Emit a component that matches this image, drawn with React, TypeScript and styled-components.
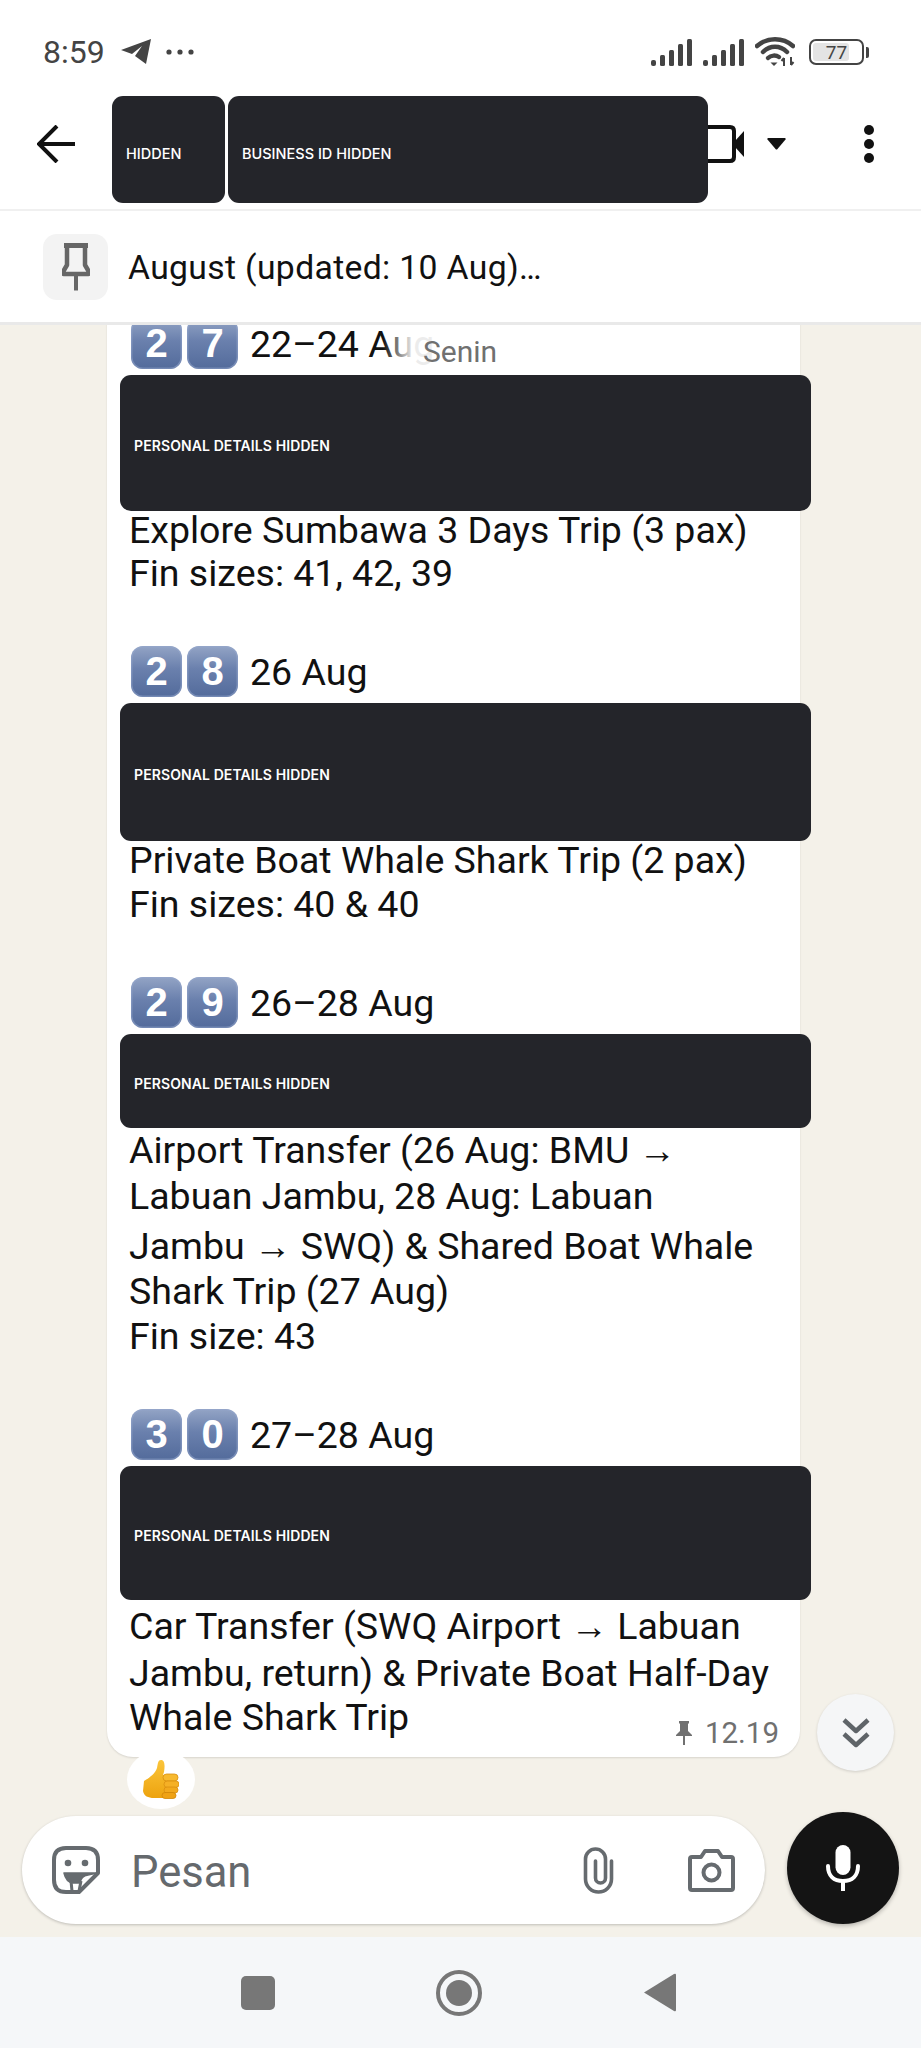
import React from "react";
import styled, { createGlobalStyle } from "styled-components";

const Global = createGlobalStyle`
  html, body { margin: 0; padding: 0; background: #fff; }
  * { box-sizing: border-box; }
`;

const Page = styled.div`
  position: relative;
  width: 921px;
  height: 2048px;
  display: flex;
  flex-direction: column;
  overflow: hidden;
  font-family: Roboto, "Liberation Sans", sans-serif;
  color: #111;
  background: #fff;
`;

const StatusBar = styled.div`
  height: 96px;
  flex: none;
  padding: 8px 52px 0 43px;
  display: flex;
  align-items: center;
  color: #444;
`;
const Time = styled.span`
  font-size: 32px;
  width: 78px;
`;
const StatusIcons = styled.div`
  margin-left: auto;
  display: flex;
  align-items: center;
  gap: 11px;
`;
const Battery = styled.div`
  position: relative;
  width: 55px;
  height: 26px;
  border: 2.5px solid #444;
  border-radius: 7px;
  margin-left: 3px;
  padding: 2px;
  display: flex;
`;
const BatteryFill = styled.div`
  width: 77%;
  background: #e4e4e4;
  border-radius: 3px;
`;
const BatteryText = styled.span`
  position: absolute;
  inset: 0;
  display: flex;
  align-items: center;
  justify-content: center;
  font-size: 19px;
  color: #444;
`;
const BatteryCap = styled.div`
  width: 3px;
  height: 11px;
  background: #444;
  border-radius: 0 2px 2px 0;
  margin-left: -9px;
`;

const Header = styled.header`
  height: 115px;
  flex: none;
  padding: 0 0 17px 37px;
  display: flex;
  align-items: center;
  border-bottom: 2px solid #f0f0f0;
`;
const HeaderRedaction = styled.div<{ $w: number }>`
  width: ${(p) => p.$w}px;
  height: 107px;
  align-self: flex-start;
  flex: none;
  background: #24252a;
  border-radius: 11px;
  display: flex;
  align-items: center;
  padding: 7px 0 0 14px;
  color: #fff;
  font: 500 14.5px Inter, Roboto, sans-serif;
`;
const RedactionGroup = styled.div`
  display: flex;
  gap: 3px;
  margin-left: 37px;
  align-self: flex-start;
  position: relative;
`;

const PinBar = styled.div`
  height: 114px;
  flex: none;
  padding-left: 43px;
  display: flex;
  align-items: center;
  gap: 20px;
  border-bottom: 3px solid #e9e9e9;
  position: relative;
  z-index: 2;
  background: #fff;
`;
const PinTile = styled.div`
  width: 65px;
  height: 66px;
  background: #f3f3f3;
  border-radius: 14px;
  display: flex;
  align-items: center;
  justify-content: center;
`;
const PinText = styled.span`
  font-size: 33.7px;
  letter-spacing: 0.35px;
  padding-top: 2px;
`;

const Chat = styled.main`
  position: relative;
  flex: 1;
  min-height: 0;
  display: flex;
  flex-direction: column;
  justify-content: flex-end;
  background: #f4f1e9;
  overflow: hidden;
`;
const Bubble = styled.section`
  position: relative;
  flex: none;
  width: 693px;
  margin-left: 107px;
  padding: 0 22px 18px 24px;
  background: #fff;
  border-radius: 0 0 26px 26px;
  box-shadow: 0 1px 2px rgba(0, 0, 0, 0.12);
`;
const Entry = styled.div`
  & + & {
    margin-top: 51px;
  }
`;
const EntryHead = styled.div`
  display: flex;
  align-items: center;
  height: 51px;
`;
const Keycap = styled.span`
  width: 51px;
  height: 51px;
  margin-right: 5px;
  border-radius: 12px;
  background: linear-gradient(180deg, #93a4c5 0%, #6a80ad 45%, #536b9b 100%);
  box-shadow: inset 0 0 0 1.5px rgba(150, 168, 205, 0.5);
  color: #fff;
  display: flex;
  align-items: center;
  justify-content: center;
  font: 700 40px "Liberation Sans", sans-serif;
`;
const DateText = styled.span`
  font-size: 37.5px;
  margin-left: 7px;
`;
const Redaction = styled.div<{ $h: number }>`
  height: ${(p) => p.$h}px;
  margin: 6px -33px 0 -11px;
  background: #24252a;
  border-radius: 11px;
  color: #fff;
  display: flex;
  align-items: center;
  padding: 5px 0 0 14px;
  font: 600 14px Inter, Roboto, sans-serif;
  letter-spacing: 0.1px;
  position: relative;
`;
const Body = styled.div`
  margin: -3px 0 0 -2px;
  font-size: 37.5px;
  color: #111;
`;
const Line = styled.div<{ $lift: number }>`
  line-height: 44px;
  height: ${(p) => 44 + p.$lift}px;
  padding-top: ${(p) => Math.max(0, p.$lift)}px;
  white-space: nowrap;
`;
const Meta = styled.div`
  position: absolute;
  right: 21px;
  bottom: 7px;
  display: flex;
  align-items: center;
  gap: 13px;
  font-size: 29.5px;
  color: #707070;
`;
const DateChip = styled.div`
  position: absolute;
  top: 7px;
  left: 383px;
  padding: 0 34px 0 40px;
  font-size: 30px;
  line-height: 40px;
  color: #707070;
  background: linear-gradient(90deg, rgba(255, 255, 255, 0) 0%, rgba(255, 255, 255, 0.92) 20%, rgba(255, 255, 255, 0.92) 78%, rgba(255, 255, 255, 0) 100%);
  z-index: 1;
`;
const ScrollButton = styled.div`
  position: absolute;
  left: 817px;
  bottom: 166px;
  width: 77px;
  height: 77px;
  border-radius: 50%;
  background: #f5f6f7;
  box-shadow: 0 1px 3px rgba(0, 0, 0, 0.15);
  display: flex;
  align-items: center;
  justify-content: center;
`;
const Reaction = styled.div`
  position: absolute;
  left: 127px;
  bottom: 128px;
  width: 68px;
  height: 59px;
  border-radius: 50%;
  background: #fff;
  display: flex;
  align-items: center;
  justify-content: center;
`;
const ComposerRow = styled.div`
  flex: none;
  display: flex;
  align-items: flex-end;
  padding: 55px 22px 13px 22px;
`;
const Composer = styled.div`
  width: 744px;
  height: 108px;
  border-radius: 54px;
  background: #fff;
  box-shadow: 0 1px 3px rgba(0, 0, 0, 0.22);
  display: flex;
  align-items: center;
  padding-left: 30px;
  padding-right: 30px;
`;
const Placeholder = styled.span`
  font-size: 43.5px;
  color: #65696d;
  margin-left: 31px;
  padding-top: 4px;
  flex: 1;
`;
const MicButton = styled.div`
  width: 112px;
  height: 112px;
  margin-left: 22px;
  border-radius: 50%;
  background: #141414;
  box-shadow: 0 2px 4px rgba(0, 0, 0, 0.25);
  display: flex;
  align-items: center;
  justify-content: center;
`;
const NavBar = styled.nav`
  height: 111px;
  flex: none;
  background: #f5f7f9;
  display: flex;
  align-items: center;
  padding-left: 241px;
`;

const Cap = ({ d }: { d: string }) => <Keycap>{d}</Keycap>;

const Signal = () => (
  <svg width="41" height="27" viewBox="0 0 41 27" fill="#444">
    <rect x="0" y="21" width="5" height="6" rx="2" />
    <rect x="9" y="16" width="5" height="11" rx="1.5" />
    <rect x="18" y="11" width="5" height="16" rx="1.5" />
    <rect x="27" y="5" width="5" height="22" rx="1.5" />
    <rect x="36" y="0" width="5" height="27" rx="1.5" />
  </svg>
);

const entries: { d: string[]; date: string; h: number; lines: [string, number][] }[] = [
  {
    d: ["2", "7"],
    date: "22–24 Aug",
    h: 136,
    lines: [
      ["Explore Sumbawa 3 Days Trip (3 pax)", -1],
      ["Fin sizes: 41, 42, 39", 0],
    ],
  },
  {
    d: ["2", "8"],
    date: "26 Aug",
    h: 138,
    lines: [
      ["Private Boat Whale Shark Trip (2 pax)", 0],
      ["Fin sizes: 40 & 40", 0],
    ],
  },
  {
    d: ["2", "9"],
    date: "26–28 Aug",
    h: 94,
    lines: [
      ["Airport Transfer (26 Aug: BMU →", 3],
      ["Labuan Jambu, 28 Aug: Labuan", 2],
      ["Jambu → SWQ) & Shared Boat Whale", 6],
      ["Shark Trip (27 Aug)", 1],
      ["Fin size: 43", 1],
    ],
  },
  {
    d: ["3", "0"],
    date: "27–28 Aug",
    h: 134,
    lines: [
      ["Car Transfer (SWQ Airport → Labuan", 7],
      ["Jambu, return) & Private Boat Half-Day", 3],
      ["Whale Shark Trip", 0],
    ],
  },
];

export default function App() {
  return (
    <Page>
      <Global />
      <StatusBar>
        <Time>8:59</Time>
        <svg width="30" height="26" viewBox="0 0 30 26" fill="#444">
          <path d="M30 0 L0 11 L11 15 L21 7 L14 17 L25 25 Z" />
        </svg>
        <svg width="28" height="6" viewBox="0 0 28 6" fill="#444" style={{ marginLeft: 15 }}>
          <circle cx="3" cy="3" r="2.6" />
          <circle cx="14" cy="3" r="2.6" />
          <circle cx="25" cy="3" r="2.6" />
        </svg>
        <StatusIcons>
          <Signal />
          <Signal />
          <svg width="40" height="30" viewBox="0 0 40 30" fill="none" stroke="#444" strokeWidth="4.5" strokeLinecap="round">
            <path d="M2 9 C12 0 28 0 38 9" />
            <path d="M8 15 C15 8 25 8 32 15" />
            <path d="M13 21 C16 18 21 18 24 20" />
            <path d="M19 29 L15.5 25.5 H22.5 Z" fill="#444" stroke="none" />
            <path d="M29 29 V21 M29 21 L26.5 24 M36 20 V28 M36 28 L38.5 25" strokeWidth="2" strokeLinecap="butt" />
          </svg>
          <Battery>
            <BatteryFill />
            <BatteryText>77</BatteryText>
          </Battery>
          <BatteryCap />
        </StatusIcons>
      </StatusBar>

      <Header>
        <svg width="38" height="38" viewBox="0 0 38 38" fill="none" stroke="#111" strokeWidth="4">
          <path d="M38 19 H3 M20 1 L2 19 L20 37" />
        </svg>
        <RedactionGroup>
          <HeaderRedaction $w={113}>HIDDEN</HeaderRedaction>
          <HeaderRedaction $w={480}>BUSINESS ID HIDDEN</HeaderRedaction>
        </RedactionGroup>
        <svg width="36" height="38" viewBox="0 0 36 38" fill="none" style={{ flex: "none" }}>
          <path d="M0 2 H22 Q26 2 26 6 V32 Q26 36 22 36 H0" stroke="#111" strokeWidth="4" />
          <path d="M27 16 L36 6 V32 L27 22 Z" fill="#111" />
        </svg>
        <svg width="19" height="12" viewBox="0 0 19 12" fill="#111" style={{ marginLeft: 23, flex: "none" }}>
          <path d="M1 0 H18 Q19 0 18.5 1.5 L10.5 11 Q9.5 12 8.5 11 L0.5 1.5 Q0 0 1 0 Z" />
        </svg>
        <svg width="10" height="38" viewBox="0 0 10 38" fill="#111" style={{ marginLeft: 78, flex: "none" }}>
          <circle cx="5" cy="5" r="5" />
          <circle cx="5" cy="19" r="5" />
          <circle cx="5" cy="33" r="5" />
        </svg>
      </Header>

      <PinBar>
        <PinTile>
          <svg width="28" height="48" viewBox="0 0 28 48" fill="none" stroke="#666" strokeWidth="4.5">
            <path d="M2 2.5 H26" strokeWidth="5" />
            <path d="M5 3 V22 L1.5 28 V31 H26.5 V28 L23 22 V3" strokeLinejoin="round" />
            <path d="M14 31 V47.5" strokeWidth="4" />
          </svg>
        </PinTile>
        <PinText>August (updated: 10 Aug)…</PinText>
      </PinBar>

      <Chat>
        <DateChip>Senin</DateChip>
        <Bubble>
          {entries.map((e) => (
            <Entry key={e.date}>
              <EntryHead>
                <Cap d={e.d[0]} />
                <Cap d={e.d[1]} />
                <DateText>{e.date}</DateText>
              </EntryHead>
              <Redaction $h={e.h}>PERSONAL DETAILS HIDDEN</Redaction>
              <Body>
                {e.lines.map(([t, lift]) => (
                  <Line key={t} $lift={lift}>
                    {t}
                  </Line>
                ))}
              </Body>
            </Entry>
          ))}
          <Meta>
            <svg width="16" height="24" viewBox="0 0 16 24" fill="#707070">
              <path d="M3 0 H13 V2 L12 3 V10 L16 14 V15 H9 V24 H7 V15 H0 V14 L4 10 V3 L3 2 Z" />
            </svg>
            <span>12.19</span>
          </Meta>
        </Bubble>
        <Reaction>
          <svg width="36" height="39" viewBox="0 0 36 39">
            <defs>
              <linearGradient id="thumb" x1="0" y1="0" x2="0" y2="1">
                <stop offset="0" stopColor="#fbc53a" />
                <stop offset="1" stopColor="#eda30f" />
              </linearGradient>
            </defs>
            <path d="M1 21 C6 18 12 14 14 8 C15 3 15 0 18 0 C22 0 22 6 21 12 L20 15 H27 V38 H11 C5 38 1 36 0 31 Z" fill="url(#thumb)" />
            <rect x="20" y="14" width="15" height="7" rx="3.5" fill="#f7b92f" stroke="#d98f10" strokeWidth="0.8" />
            <rect x="21" y="21" width="15" height="6.5" rx="3.2" fill="#f5b026" stroke="#d98f10" strokeWidth="0.8" />
            <rect x="21" y="27" width="14" height="6" rx="3" fill="#f2a91d" stroke="#d98f10" strokeWidth="0.8" />
            <rect x="19" y="32.5" width="14" height="6" rx="3" fill="#efa214" stroke="#d08608" strokeWidth="0.8" />
          </svg>
        </Reaction>
        <ScrollButton>
          <svg width="28" height="30" viewBox="0 0 28 30" fill="none" stroke="#5f6468" strokeWidth="4.5" strokeLinejoin="round">
            <path d="M2 2 L14 13 L26 2" />
            <path d="M2 16 L14 27 L26 16" />
          </svg>
        </ScrollButton>
        <ComposerRow>
          <Composer>
            <svg width="48" height="48" viewBox="0 0 48 48" fill="none" stroke="#666b6f" strokeWidth="4" style={{ flex: "none" }}>
              <path d="M14 2 H34 Q46 2 46 14 V27 L27 46 H14 Q2 46 2 34 V14 Q2 2 14 2 Z" strokeLinejoin="round" />
              <circle cx="16" cy="17" r="3.3" fill="#666b6f" stroke="none" />
              <circle cx="33" cy="17" r="3.3" fill="#666b6f" stroke="none" />
              <path d="M12 27 H45 L36 29 Q29 30 28 37 H21 Q14 36 12 27 Z" fill="#666b6f" stroke="#666b6f" strokeWidth="1.5" strokeLinejoin="round" />
              <path d="M19 35 L20 45 M29 35 L27 45" strokeWidth="3" />
            </svg>
            <Placeholder>Pesan</Placeholder>
            <svg width="31" height="47" viewBox="0 0 31 47" fill="none" stroke="#666b6f" strokeWidth="3.6" strokeLinecap="round" style={{ flex: "none" }}>
              <path d="M28.5 14 V32 A13 13 0 0 1 2.5 32 V12 A10 10 0 0 1 22.5 12 V31 A5 5 0 0 1 12.5 31 V14" />
            </svg>
            <svg width="47" height="43" viewBox="0 0 47 43" fill="none" stroke="#666b6f" strokeWidth="4" style={{ marginLeft: 74, flex: "none" }}>
              <path d="M4 8 H13 L17 2 H30 L34 8 H43 Q45 8 45 10 V39 Q45 41 43 41 H4 Q2 41 2 39 V10 Q2 8 4 8 Z" strokeLinejoin="round" />
              <circle cx="23.5" cy="23.5" r="8" />
            </svg>
          </Composer>
          <MicButton>
            <svg width="34" height="46" viewBox="0 0 34 46" fill="#fff">
              <rect x="9.5" y="0" width="15" height="30" rx="7.5" />
              <path d="M2 21 C2 31 8 36 17 36 C26 36 32 31 32 21" fill="none" stroke="#fff" strokeWidth="4" strokeLinecap="round" />
              <rect x="15" y="35" width="4" height="11" />
            </svg>
          </MicButton>
        </ComposerRow>
      </Chat>

      <NavBar>
        <svg width="34" height="34" viewBox="0 0 34 34" fill="#777">
          <rect width="34" height="34" rx="5" />
        </svg>
        <svg width="46" height="46" viewBox="0 0 46 46" style={{ marginLeft: 161 }}>
          <circle cx="23" cy="23" r="21" fill="none" stroke="#777" strokeWidth="4" />
          <circle cx="23" cy="23" r="13" fill="#777" />
        </svg>
        <svg width="32" height="39" viewBox="0 0 32 39" fill="#777" style={{ marginLeft: 162 }}>
          <path d="M32 2 V37 Q32 39 30 38 L0 19.5 L30 1 Q32 0 32 2 Z" />
        </svg>
      </NavBar>
    </Page>
  );
}
